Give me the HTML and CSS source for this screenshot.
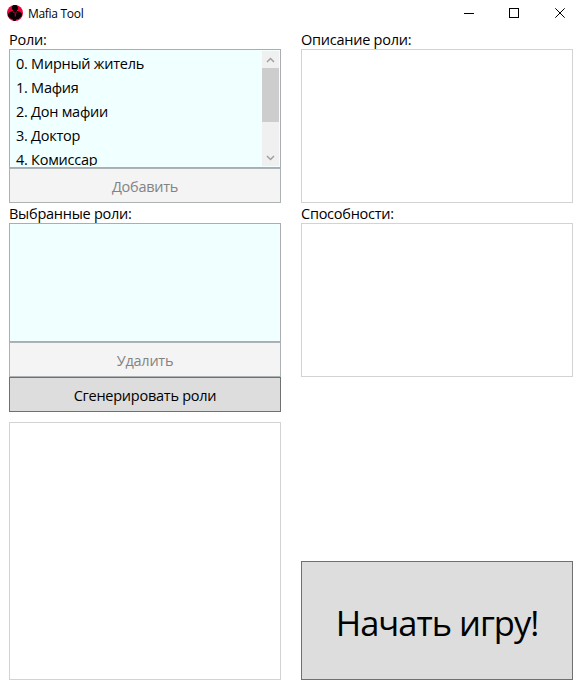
FILE: index.html
```html
<!DOCTYPE html>
<html lang="ru">
<head>
<meta charset="utf-8">
<title>Mafia Tool</title>
<link rel="stylesheet" href="styles.css">
</head>
<body>
<header class="titlebar">
  <svg class="logo" width="16" height="16" viewBox="0 0 16 16">
    <circle cx="8" cy="8" r="8" fill="#e8053f"/>
    <path d="M5 1.200 6.200.8 6.200 0h3.600v1L11 2v2L9.800 5.200 10 6l3 .8 2 2-.5 2.700L11.500 14 9 14.500 8.500 16h-2L6 14.500 3.500 13.500 1.300 11.500 1 9 2.500 7 6 6V5L4.800 4z" fill="#080003"/>
    <path d="M6.200 6.800 8 8.500 9.800 6.800M8.300 9v2.500" fill="none" stroke="#d0073a"/>
  </svg>
  <span class="title">Mafia Tool</span>
  <svg class="controls" width="102" height="10" viewBox="0 0 102 10">
    <path d="M0 5.500h10M45.500.500h9v9h-9z" fill="none" stroke="#000" shape-rendering="crispEdges"/>
    <path d="M91.300.300l9.400 9.400M100.700.300l-9.400 9.400" fill="none" stroke="#000"/>
  </svg>
</header>
<main class="window">
  <section class="column">
    <div class="label">Роли:</div>
    <div class="list">
      <ul class="items">
        <li>0. Мирный житель</li>
        <li>1. Мафия</li>
        <li>2. Дон мафии</li>
        <li>3. Доктор</li>
        <li>4. Комиссар</li>
      </ul>
      <div class="scrollbar">
        <svg width="17" height="17" viewBox="0 0 17 17"><path d="M5 11l3.500-3.500L12 11" class="arrow"/></svg>
        <div class="thumb"></div>
        <svg class="down" width="17" height="17" viewBox="0 0 17 17"><path d="M5 7l3.500 3.500L12 7" class="arrow"/></svg>
      </div>
    </div>
    <button class="button" disabled>Добавить</button>
    <div class="label">Выбранные роли:</div>
    <div class="list"></div>
    <button class="button" disabled>Удалить</button>
    <button class="button">Сгенерировать роли</button>
    <div class="box output"></div>
  </section>
  <section class="column">
    <div class="label">Описание роли:</div>
    <div class="box info"></div>
    <div class="label">Способности:</div>
    <div class="box info"></div>
    <button class="button start">Начать игру!</button>
  </section>
</main>
</body>
</html>
```
FILE: styles.css
```css
* { box-sizing: border-box; }
body {
  margin: 0;
  height: 690px;
  overflow: hidden;
  background: #fff;
  color: #000;
  font-family: "Open Sans", "Noto Sans", sans-serif;
  font-size: 14.5px;
  letter-spacing: -0.25px;
}
.titlebar {
  display: flex;
  align-items: center;
  height: 26px;
  padding: 0 16px 0 7px;
}
.logo { flex: none; }
.title {
  margin-left: 5px;
  padding-top: 1px;
  font-size: 12px;
  letter-spacing: -0.3px;
}
.controls { margin-left: auto; }
.window {
  display: grid;
  grid-template-columns: 272px 272px;
  gap: 20px;
  height: 654px;
  padding: 3px 0 0 9px;
}
.column {
  display: flex;
  flex-direction: column;
}
.label {
  height: 20px;
  line-height: 21px;
  flex: none;
  white-space: nowrap;
}
.list {
  display: flex;
  flex: none;
  height: 119px;
  padding: 1px;
  border: 1px solid #abadb3;
  background: #f0ffff;
  overflow: hidden;
}
.items {
  flex: 1;
  height: 115px;
  margin: 0;
  padding: 1px 0 0 5px;
  overflow: hidden;
  list-style: none;
}
.items li {
  height: 24px;
  line-height: 24px;
}
.scrollbar {
  display: flex;
  flex-direction: column;
  width: 17px;
  height: 115px;
  background: #f0f0f0;
}
.scrollbar svg { flex: none; }
.thumb {
  height: 54px;
  background: #cdcdcd;
}
.down { margin-top: auto; }
.arrow {
  fill: none;
  stroke: #a0a0a0;
  stroke-width: 1.5;
}
.button {
  flex: none;
  height: 35px;
  padding: 1px 0 0;
  border: 1px solid #707070;
  border-radius: 0;
  background: #ddd;
  color: #000;
  font: inherit;
  letter-spacing: inherit;
}
.button:disabled {
  border-color: #adb2b5;
  background: #f4f4f4;
  color: #838383;
}
.box {
  border: 1px solid #d3d3d3;
  background: #fff;
}
.output {
  flex: 1;
  margin-top: 10px;
}
.info { height: 154px; }
.start {
  height: 119px;
  margin-top: auto;
  font-size: 34.5px;
  letter-spacing: -1px;
  padding: 4px 0 0;
}
```
